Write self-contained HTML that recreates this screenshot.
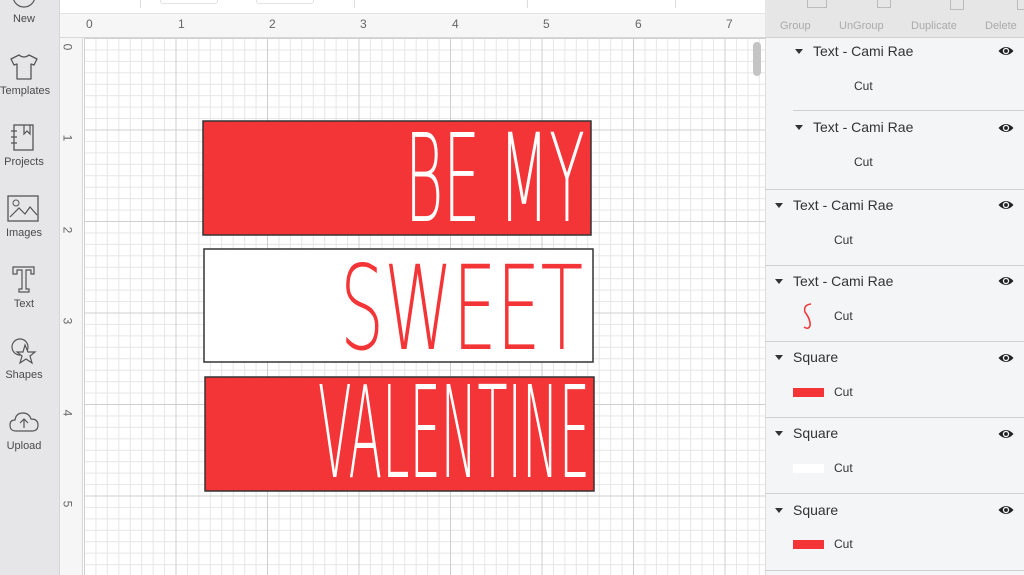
<!DOCTYPE html>
<html><head><meta charset="utf-8"><style>
*{margin:0;padding:0;box-sizing:border-box}
body{width:1024px;height:575px;overflow:hidden;background:#fff;font-family:"Liberation Sans",Arial,sans-serif;position:relative}
.abs{position:absolute}
#side{left:0;top:0;width:60px;height:575px;background:#e6e6e8;border-right:1px solid #d6d6d6}
.si{position:absolute;left:0;width:48px;text-align:center;font-size:11px;color:#4a4a4a}
#tool{left:60px;top:0;width:705px;height:14px;background:#fff;border-bottom:1px solid #e4e4e4}
#rt{left:60px;top:14px;width:705px;height:24px;background:#f6f6f6;border-bottom:1px solid #d8d8d8}
#rl{left:60px;top:38px;width:23px;height:537px;background:#f6f6f6;border-right:1px solid #d8d8d8}
#grid{left:84px;top:38px;width:681px;height:537px;background-color:#fff;
background-image:
linear-gradient(to right,#cfcfcf 1px,transparent 1px),
linear-gradient(to bottom,#cfcfcf 1px,transparent 1px),
linear-gradient(to right,#e6e6e6 1px,transparent 1px),
linear-gradient(to bottom,#e6e6e6 1px,transparent 1px);
background-size:91.5px 91.5px,91.5px 91.5px,11.4375px 11.4375px,11.4375px 11.4375px;background-position:0 0}
.rn{position:absolute;font-size:12px;color:#666}
#panel{left:765px;top:0;width:259px;height:575px;background:#f4f5f7;border-left:1px solid #ddd}
#ph{left:765px;top:0;width:259px;height:38px;background:#e6e6e6;border-bottom:1px solid #d0d0d0}
.pl{position:absolute;top:20px;font-size:11px;color:#aaa}
.t{position:absolute;font-size:14px;color:#333}
.c{position:absolute;font-size:12px;color:#333}
.tri{position:absolute;width:0;height:0;border-left:4px solid transparent;border-right:4px solid transparent;border-top:5px solid #333}
.sep{position:absolute;height:1px;background:#cfcfcf;right:0}
</style></head><body>
<div id="side" class="abs">
<svg class="abs" style="left:10px;top:-12px" width="40" height="24"><circle cx="14" cy="8" r="11" fill="none" stroke="#555" stroke-width="1.2"/></svg>
<div class="si" style="top:13px">New</div>
<svg class="abs" style="left:8px;top:53px" width="32" height="28" viewBox="0 0 32 28"><path d="M11 2 Q16 6 21 2 L29 6 L26 12 L23 11 L23 26 L9 26 L9 11 L6 12 L3 6 Z" fill="none" stroke="#555" stroke-width="1.3" stroke-linejoin="round"/></svg>
<div class="si" style="top:85px">Templates</div>
<svg class="abs" style="left:10px;top:123px" width="28" height="30"><rect x="4" y="2" width="19" height="25" fill="none" stroke="#555" stroke-width="1.3"/><path d="M14 2 V11 L17 8 L20 11 V2 M1 8 H7 M1 14 H7 M1 20 H7" fill="none" stroke="#555" stroke-width="1.2"/></svg>
<div class="si" style="top:156px">Projects</div>
<svg class="abs" style="left:7px;top:195px" width="32" height="28"><rect x="1" y="1" width="30" height="25" fill="none" stroke="#555" stroke-width="1.3"/><circle cx="9" cy="8" r="3" fill="none" stroke="#555"/><path d="M3 22 L12 13 L18 19 L23 12 L30 20" fill="none" stroke="#555" stroke-width="1.2"/></svg>
<div class="si" style="top:227px">Images</div>
<svg class="abs" style="left:11px;top:265px" width="26" height="30"><path d="M2 2 H23 V9 H20 V5 H15 V24 H18 V27 H8 V24 H11 V5 H6 V9 H2 Z" fill="none" stroke="#555" stroke-width="1.2"/></svg>
<div class="si" style="top:298px">Text</div>
<svg class="abs" style="left:10px;top:337px" width="28" height="28"><circle cx="10" cy="10" r="8" fill="none" stroke="#555" stroke-width="1.2"/><path d="M15 8 L18 15 L25 15 L20 19 L22 26 L16 22 L10 26 L12 19 L7 15 L13 15 Z" fill="#e6e6e8" stroke="#555" stroke-width="1.2"/></svg>
<div class="si" style="top:369px">Shapes</div>
<svg class="abs" style="left:9px;top:410px" width="30" height="24"><path d="M7 21 Q1 21 1 15 Q1 10 6 10 Q7 3 14 3 Q20 3 22 9 Q29 9 29 15 Q29 21 23 21 Z" fill="none" stroke="#555" stroke-width="1.2"/><path d="M15 18 V10 M11 13 L15 9 L19 13" fill="none" stroke="#555" stroke-width="1.2"/></svg>
<div class="si" style="top:440px">Upload</div>
</div>
<div id="tool" class="abs">
<div class="abs" style="left:100px;top:-6px;width:58px;height:10px;border:1px solid #e3e3e3;border-radius:3px"></div>
<div class="abs" style="left:196px;top:-6px;width:58px;height:10px;border:1px solid #e3e3e3;border-radius:3px"></div>
<div class="abs" style="left:80px;top:0;width:1px;height:8px;background:#ddd"></div>
<div class="abs" style="left:294px;top:0;width:1px;height:8px;background:#ddd"></div>
<div class="abs" style="left:467px;top:0;width:1px;height:8px;background:#ddd"></div>
<div class="abs" style="left:615px;top:0;width:1px;height:8px;background:#ddd"></div>
</div>
<div id="rt" class="abs">
<span class="rn" style="left:26px;top:3px">0</span><span class="rn" style="left:118px;top:3px">1</span><span class="rn" style="left:209px;top:3px">2</span><span class="rn" style="left:300px;top:3px">3</span><span class="rn" style="left:392px;top:3px">4</span><span class="rn" style="left:483px;top:3px">5</span><span class="rn" style="left:575px;top:3px">6</span><span class="rn" style="left:666px;top:3px">7</span>
</div>
<div id="rl" class="abs">
<span class="rn" style="left:4px;top:2px;transform:rotate(90deg)">0</span><span class="rn" style="left:4px;top:93px;transform:rotate(90deg)">1</span><span class="rn" style="left:4px;top:185px;transform:rotate(90deg)">2</span><span class="rn" style="left:4px;top:276px;transform:rotate(90deg)">3</span><span class="rn" style="left:4px;top:368px;transform:rotate(90deg)">4</span><span class="rn" style="left:4px;top:459px;transform:rotate(90deg)">5</span>
</div>
<div id="grid" class="abs"></div>
<div class="abs" style="left:753px;top:42px;width:8px;height:34px;background:#c4c4c4;border-radius:4px"></div>

<svg class="abs" style="left:0;top:0" width="765" height="575">
<rect x="203" y="121" width="388" height="114" fill="#f33538" stroke="#333" stroke-width="1.5"/>
<rect x="204" y="249" width="389" height="113" fill="#fff" stroke="#333" stroke-width="1.5"/>
<rect x="205" y="377" width="389" height="114" fill="#f33538" stroke="#333" stroke-width="1.5"/>
<g font-family="DejaVu Sans, Liberation Sans, sans-serif" font-weight="200">
<text transform="translate(405,221) scale(0.42,1)" x="0" y="0" font-size="122" fill="#fff" textLength="428" lengthAdjust="spacingAndGlyphs">BE MY</text>
<text transform="translate(340,349) scale(0.5,1)" x="0" y="0" font-size="117" fill="#f33538" textLength="486" lengthAdjust="spacingAndGlyphs">SWEET</text>
<text transform="translate(318,477) scale(0.33,1)" x="0" y="0" font-size="128" fill="#fff" textLength="824" lengthAdjust="spacingAndGlyphs">VALENTINE</text>
</g>
</svg>

<div id="panel" class="abs"></div>
<div id="ph" class="abs">
<span class="pl" style="left:15px">Group</span><span class="pl" style="left:74px">UnGroup</span><span class="pl" style="left:146px">Duplicate</span><span class="pl" style="left:220px">Delete</span>
<div class="abs" style="left:42px;top:0;width:20px;height:8px;border:1px solid #bbb;border-top:none"></div>
<div class="abs" style="left:112px;top:0;width:14px;height:8px;border:1px solid #bbb;border-top:none"></div>
<div class="abs" style="left:185px;top:0;width:14px;height:10px;border:1px solid #bbb;border-top:none"></div>
<div class="abs" style="left:252px;top:0;width:10px;height:10px;border:1px solid #bbb;border-top:none"></div>
</div>

<div class="tri" style="left:795px;top:49px"></div><div class="t" style="left:813px;top:43px">Text - Cami Rae</div><div class="c" style="left:854px;top:79px">Cut</div>
<div class="sep" style="left:793px;top:110px"></div>
<div class="tri" style="left:795px;top:125px"></div><div class="t" style="left:813px;top:119px">Text - Cami Rae</div><div class="c" style="left:854px;top:155px">Cut</div>
<div class="sep" style="left:765px;top:189px"></div>
<div class="tri" style="left:775px;top:203px"></div><div class="t" style="left:793px;top:197px">Text - Cami Rae</div><div class="c" style="left:834px;top:233px">Cut</div>
<div class="sep" style="left:765px;top:265px"></div>
<div class="tri" style="left:775px;top:279px"></div><div class="t" style="left:793px;top:273px">Text - Cami Rae</div><div class="c" style="left:834px;top:309px">Cut</div>
<svg class="abs" style="left:800px;top:302px" width="16" height="28"><path d="M11 2 Q3 3 5 10 Q11 18 10 24 Q8 28 4 25" fill="none" stroke="#f33538" stroke-width="1.5"/></svg>
<div class="sep" style="left:765px;top:341px"></div>
<div class="tri" style="left:775px;top:355px"></div><div class="t" style="left:793px;top:349px">Square</div><div class="c" style="left:834px;top:385px">Cut</div>
<div class="abs" style="left:793px;top:388px;width:31px;height:9px;background:#f33538"></div>
<div class="sep" style="left:765px;top:417px"></div>
<div class="tri" style="left:775px;top:431px"></div><div class="t" style="left:793px;top:425px">Square</div><div class="c" style="left:834px;top:461px">Cut</div>
<div class="abs" style="left:793px;top:464px;width:31px;height:9px;background:#fff"></div>
<div class="sep" style="left:765px;top:493px"></div>
<div class="tri" style="left:775px;top:508px"></div><div class="t" style="left:793px;top:502px">Square</div><div class="c" style="left:834px;top:537px">Cut</div>
<div class="abs" style="left:793px;top:540px;width:31px;height:9px;background:#f33538"></div>
<div class="sep" style="left:765px;top:570px"></div>

<svg class="abs" style="left:0;top:0" width="1024" height="575">
<defs><g id="e"><path d="M-7.5 0 Q0 -8 7.5 0 Q0 8 -7.5 0 Z" fill="#222"/><circle r="3.2" fill="#f4f5f7"/><circle r="1.9" fill="#222"/></g></defs>
<use href="#e" x="1006" y="51"/><use href="#e" x="1006" y="128"/><use href="#e" x="1006" y="205"/><use href="#e" x="1006" y="281"/><use href="#e" x="1006" y="358"/><use href="#e" x="1006" y="434"/><use href="#e" x="1006" y="510"/>
</svg>
</body></html>
